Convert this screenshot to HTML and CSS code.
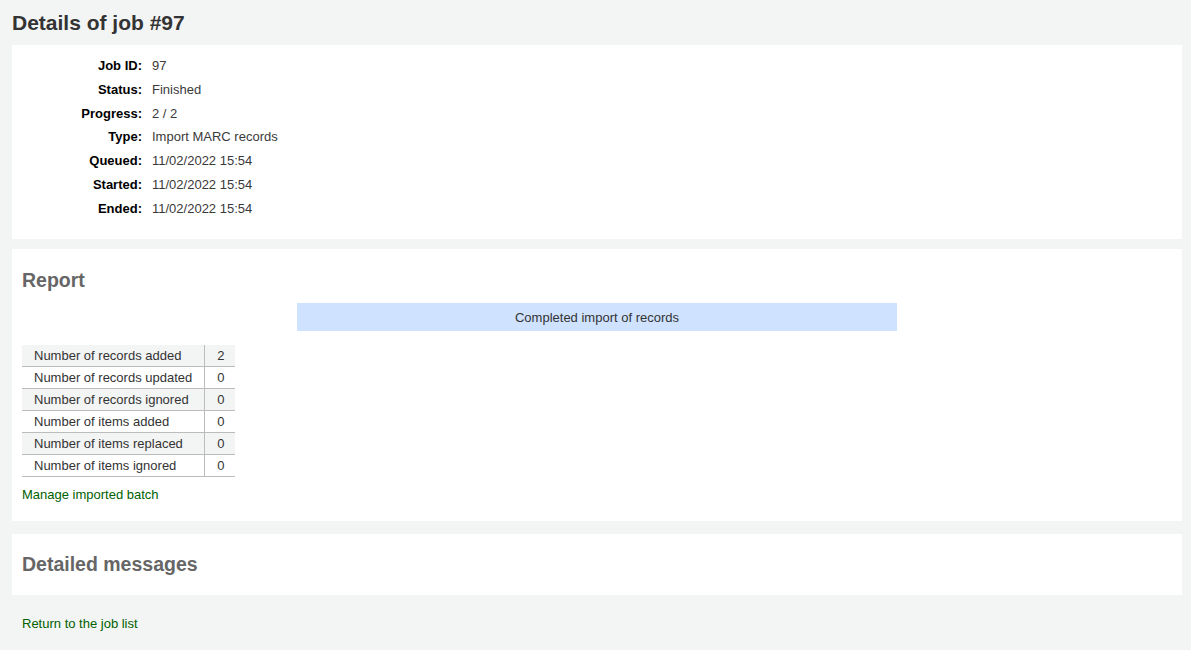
FILE: index.html
```html
<!DOCTYPE html>
<html lang="en">
<head>
<meta charset="utf-8">
<title>Details of job #97</title>
<link rel="stylesheet" href="styles.css">
</head>
<body>
<main class="page">
  <h1 class="page-title">Details of job #97</h1>

  <section class="panel panel-details">
    <ul class="details">
      <li><span class="label">Job ID:</span><span class="value">97</span></li>
      <li><span class="label">Status:</span><span class="value">Finished</span></li>
      <li><span class="label">Progress:</span><span class="value">2 / 2</span></li>
      <li><span class="label">Type:</span><span class="value">Import MARC records</span></li>
      <li><span class="label">Queued:</span><span class="value">11/02/2022 15:54</span></li>
      <li><span class="label">Started:</span><span class="value">11/02/2022 15:54</span></li>
      <li><span class="label">Ended:</span><span class="value">11/02/2022 15:54</span></li>
    </ul>
  </section>

  <section class="panel panel-report">
    <h2 class="section-title">Report</h2>
    <div class="alert-row">
      <div class="alert">Completed import of records</div>
    </div>
    <table class="stats">
      <tbody>
        <tr><td>Number of records added</td><td>2</td></tr>
        <tr><td>Number of records updated</td><td>0</td></tr>
        <tr><td>Number of records ignored</td><td>0</td></tr>
        <tr><td>Number of items added</td><td>0</td></tr>
        <tr><td>Number of items replaced</td><td>0</td></tr>
        <tr><td>Number of items ignored</td><td>0</td></tr>
      </tbody>
    </table>
    <a class="link" href="#">Manage imported batch</a>
  </section>

  <section class="panel panel-messages">
    <h2 class="section-title">Detailed messages</h2>
  </section>

  <div class="footer-link">
    <a class="link" href="#">Return to the job list</a>
  </div>
</main>
</body>
</html>
```

FILE: styles.css
```css
html, body {
  margin: 0;
  padding: 0;
}

body {
  background: #f3f4f4;
  font-family: "Liberation Sans", Arial, sans-serif;
  font-size: 13px;
  color: #333;
}

.page {
  padding: 0 9px 0 12px;
}

.page-title {
  margin: 0;
  padding: 10px 0 0;
  font-size: 21px;
  line-height: 25px;
  font-weight: bold;
  color: #333;
  height: 35px;
  box-sizing: border-box;
}

.panel {
  background: #fff;
  padding: 0 10px;
}

.panel-details {
  margin-top: 10px;
  padding-top: 9px;
  padding-bottom: 18px;
}

.details {
  list-style: none;
  margin: 0;
  padding: 0;
}

.details li {
  display: flex;
  gap: 10px;
  padding: 3px 0;
  line-height: 17.83px;
}

.details .label {
  width: 120px;
  text-align: right;
  font-weight: bold;
  color: #000;
}

.details .value {
  color: #3a3a3a;
}

.panel-report {
  margin-top: 10px;
  padding-top: 19px;
  padding-bottom: 18px;
}

.section-title {
  margin: 0;
  font-size: 19.5px;
  line-height: 24px;
  font-weight: bold;
  color: #666;
}

.alert-row {
  display: flex;
  justify-content: center;
  margin-top: 11px;
}

.alert {
  width: 600px;
  height: 28px;
  line-height: 29px;
  text-align: center;
  background: #cfe2ff;
  color: #333;
}

.stats {
  margin-top: 14px;
  border-collapse: collapse;
}

.stats td {
  padding: 0 12px 0 12px;
  height: 21px;
  line-height: 21px;
  border-bottom: 1px solid #bcbcbc;
  white-space: nowrap;
}

.stats td + td {
  border-left: 1px solid #bcbcbc;
  padding-right: 10px;
}

.stats tr:nth-child(odd) td {
  background: #f3f4f4;
}

.link {
  display: inline-block;
  color: #006100;
  text-decoration: none;
  line-height: 17px;
}

.panel-report .link {
  margin-top: 9px;
}

.panel-messages {
  margin-top: 13px;
  padding-top: 18px;
  padding-bottom: 19px;
}

.footer-link {
  padding: 20px 10px 0;
}
```
